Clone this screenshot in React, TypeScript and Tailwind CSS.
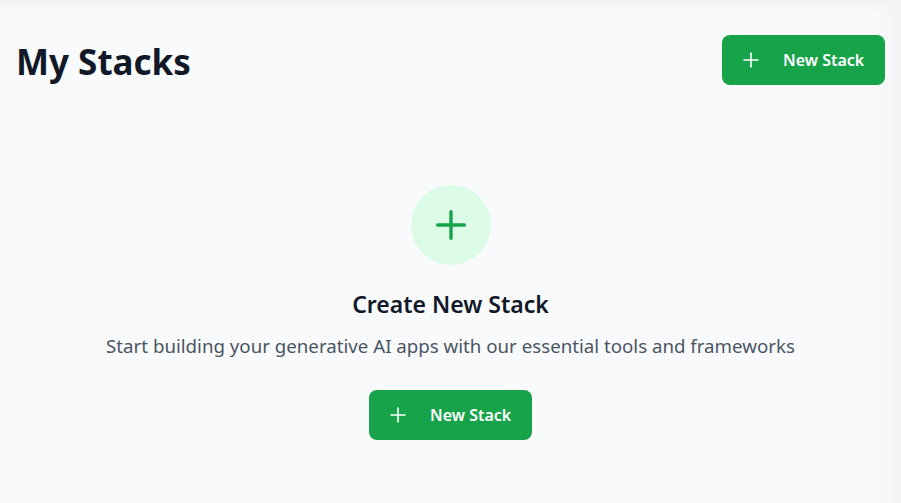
import React from "react";

function PlusIcon({ className, strokeWidth = 2 }: { className?: string; strokeWidth?: number }) {
  return (
    <svg className={className} fill="none" stroke="currentColor" viewBox="0 0 24 24">
      <path strokeLinecap="round" strokeLinejoin="round" strokeWidth={strokeWidth} d="M12 5v14M5 12h14" />
    </svg>
  );
}

function NewStackButton() {
  return (
    <button className="flex h-[50px] w-[163px] items-center rounded-lg bg-[#16a34a] pl-[17px] text-white hover:bg-green-700">
      <PlusIcon className="h-6 w-6" strokeWidth={1.6} />
      <span className="ml-5 text-base font-semibold">New Stack</span>
    </button>
  );
}

export default function App() {
  return (
    <div
      className="relative h-[503px] w-full overflow-hidden bg-[#f9fafb]"
      style={{ fontFamily: '"Noto Sans", "Open Sans", sans-serif' }}
    >
      {/* shadow from bar above and edge on the right */}
      <div className="pointer-events-none absolute inset-x-0 top-0 h-3 bg-gradient-to-b from-[#f1f2f4] to-transparent" />
      <div className="pointer-events-none absolute inset-y-0 right-0 w-[26px] bg-gradient-to-r from-transparent to-[#f2f3f5]" />

      <div className="relative z-10">
        {/* Header */}
        <div className="flex items-start justify-between px-4 pt-[35px]">
          <h1 className="mt-[2px] text-[35px] font-bold leading-[50px] text-[#111827]">My Stacks</h1>
          <NewStackButton />
        </div>

        {/* Empty state */}
        <div className="flex flex-col items-center pt-[98px]">
          <div className="flex h-20 w-20 items-center justify-center rounded-full bg-[#dcfce7] text-[#16a34a]">
            <svg className="h-10 w-10" fill="none" stroke="currentColor" viewBox="0 0 24 24">
              <path strokeLinecap="round" strokeLinejoin="round" strokeWidth={2} d="M12 4v16m8-8H4" />
            </svg>
          </div>
          <h2 className="mt-[23px] text-[23px] font-semibold leading-8 text-[#111827]">Create New Stack</h2>
          <p className="mt-[12px] text-[18.7px] leading-7 text-[#4b5563]">
            Start building your generative AI apps with our essential tools and frameworks
          </p>
          <div className="mt-[30px]">
            <NewStackButton />
          </div>
        </div>
      </div>
    </div>
  );
}
